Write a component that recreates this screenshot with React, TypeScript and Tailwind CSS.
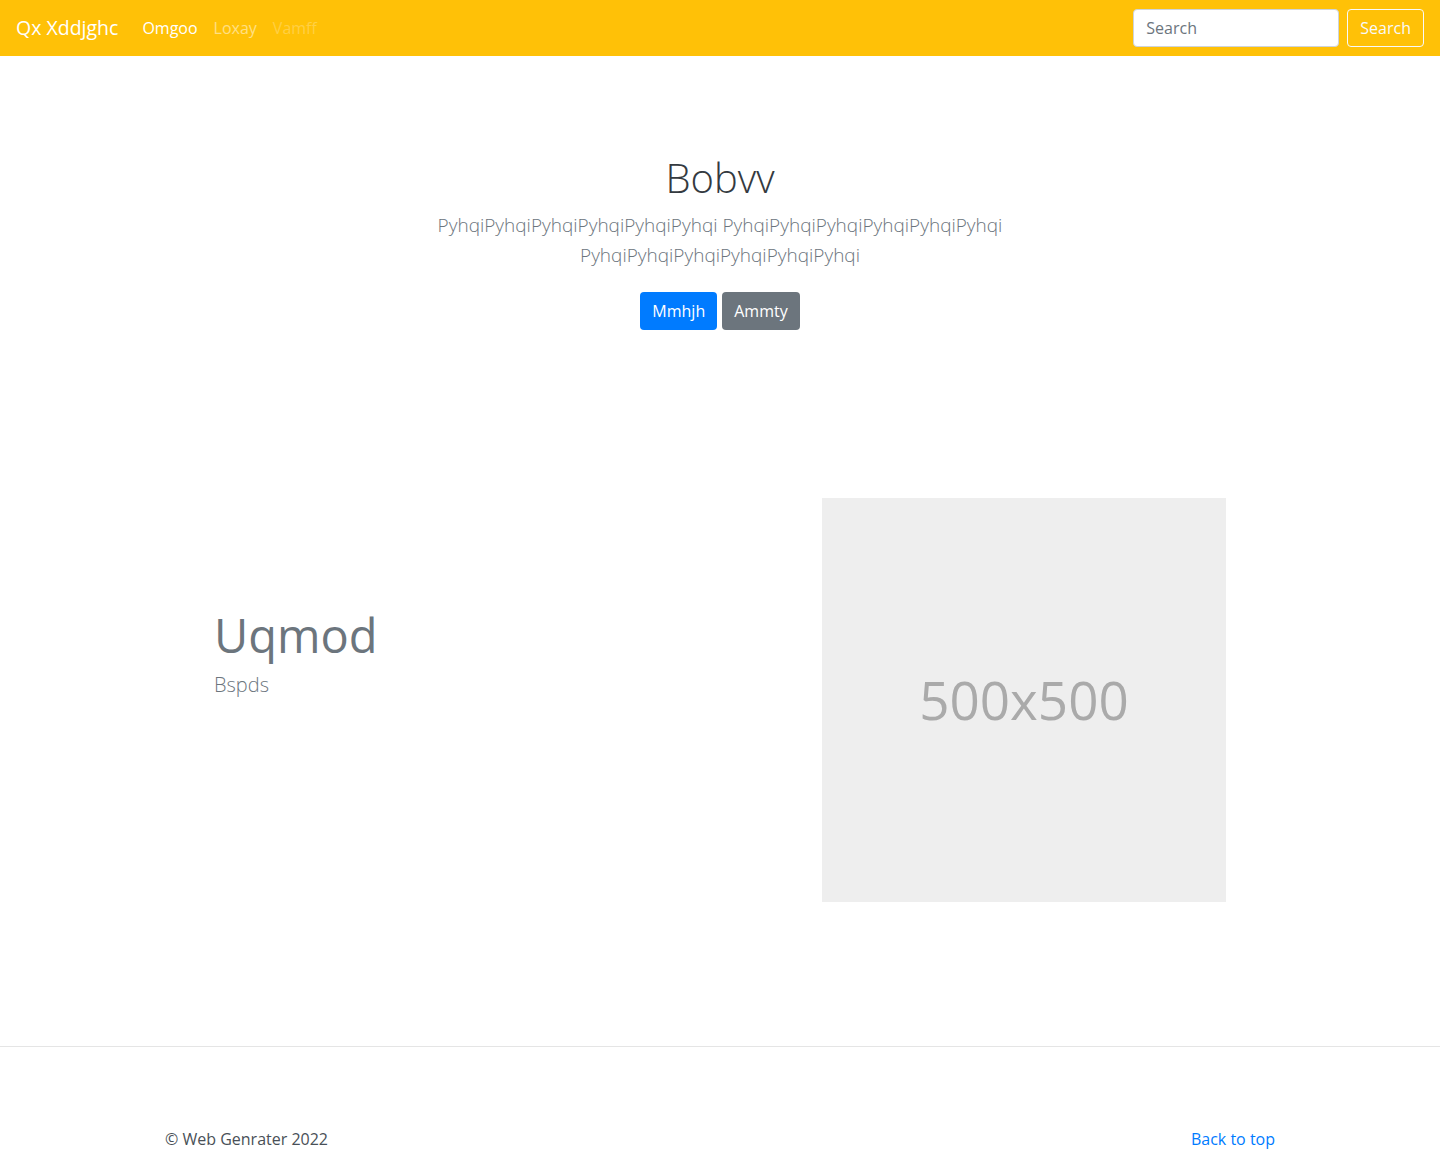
import React from "react";

export default function App() {
  const font = { fontFamily: '"Open Sans", "Noto Sans", "Liberation Sans", sans-serif' };
  return (
    <div className="min-h-[1151px] bg-white text-[#212529]" style={font}>
      <nav className="flex h-[56px] items-center justify-between bg-[#ffc107] px-4">
        <div className="flex items-center">
          <a className="mr-[16px] text-[19.5px] leading-[30px] text-white">Qx Xddjghc</a>
          <div className="flex items-center text-[16px]">
            <a className="px-2 text-white">Omgoo</a>
            <a className="px-2 text-white/50">Loxay</a>
            <a className="px-2 text-white/25">Vamff</a>
          </div>
        </div>
        <div className="flex items-center gap-2">
          <input
            placeholder="Search"
            className="h-[38px] w-[206px] rounded-[4px] border border-[#ced4da] bg-white px-3 text-[16px] text-[#495057] placeholder:text-[#6c757d] outline-none"
          />
          <button className="h-[38px] rounded-[4px] border border-[#f8f9fa] px-3 text-[16px] text-[#f8f9fa]">
            Search
          </button>
        </div>
      </nav>

      <section className="flex flex-col items-center pt-[98px] text-center">
        <h1 className="text-[40px] font-light leading-[48px] text-[#343a40]">Bobvv</h1>
        <p className="mt-[8px] max-w-[640px] text-[19px] font-light leading-[30px] text-[#6c757d]">
          PyhqiPyhqiPyhqiPyhqiPyhqiPyhqi PyhqiPyhqiPyhqiPyhqiPyhqiPyhqi PyhqiPyhqiPyhqiPyhqiPyhqiPyhqi
        </p>
        <div className="mt-[22px] flex gap-[5px]">
          <button className="h-[38px] rounded-[4px] bg-[#007bff] px-3 text-[16px] text-white">Mmhjh</button>
          <button className="h-[38px] rounded-[4px] bg-[#6c757d] px-3 text-[16px] text-white">Ammty</button>
        </div>
      </section>

      <section className="mx-auto mt-[168px] flex w-[1110px] items-center">
        <div className="flex w-[657px] flex-col pl-[49px] pb-[94px]">
          <h2 className="text-[47px] leading-[58px] text-[#6c757d]">Uqmod</h2>
          <p className="mt-[6px] text-[20px] font-light leading-[30px] text-[#6c757d]">Bspds</p>
        </div>
        <div className="flex h-[404px] w-[404px] items-center justify-center bg-[#eeeeee]">
          <span className="text-[53px] text-[#aaaaaa]">500x500</span>
        </div>
      </section>

      <footer className="mt-[144px] border-t border-[#e5e5e5] pt-[80px]">
        <div className="mx-auto flex w-[1110px] items-center justify-between text-[16px] leading-[24px]">
          <p className="text-[#495057]">© Web Genrater 2022</p>
          <a className="text-[#007bff]">Back to top</a>
        </div>
      </footer>
    </div>
  );
}
